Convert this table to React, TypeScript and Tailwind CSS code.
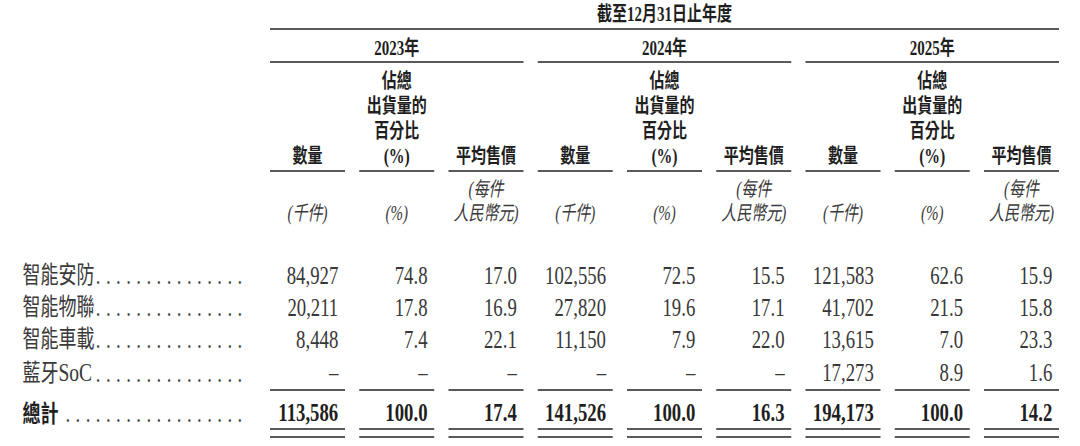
const years = ['2023', '2024', '2025'];

const rows: { label: string; latin?: string; v: string[] }[] = [
  { label: '智能安防', v: ['84,927', '74.8', '17.0', '102,556', '72.5', '15.5', '121,583', '62.6', '15.9'] },
  { label: '智能物聯', v: ['20,211', '17.8', '16.9', '27,820', '19.6', '17.1', '41,702', '21.5', '15.8'] },
  { label: '智能車載', v: ['8,448', '7.4', '22.1', '11,150', '7.9', '22.0', '13,615', '7.0', '23.3'] },
  { label: '藍牙', latin: 'SoC', v: ['–', '–', '–', '–', '–', '–', '17,273', '8.9', '1.6'] },
];

const totals = ['113,586', '100.0', '17.4', '141,526', '100.0', '16.3', '194,173', '100.0', '14.2'];

function Dots({ n }: { n: number }) {
  return (
    <span className="text-[25px] leading-none tracking-[7.25px] mr-[-7.25px] text-[#444] whitespace-nowrap">
      {'.'.repeat(n)}
    </span>
  );
}

export default function App() {
  const idx = [0, 1, 2, 3, 4, 5, 6, 7, 8];
  return (
    <div className="w-[1080px] h-[446px] overflow-hidden bg-white">
      <div className="w-[1440px] origin-top-left [transform:scaleX(0.75)] font-['Liberation_Serif','Noto_Sans_CJK_TC',serif] text-[#383838]">
        {/* header */}
        <div className="ml-[360px] w-[1052px] text-[#1f1f1f] font-bold text-[20px]">
          <div className="h-[30px] border-b-2 border-[#5a5a5a] flex items-center justify-center leading-none">
            截至12月31日止年度
          </div>
          <div className="flex gap-[19px]">
            {years.map((y) => (
              <div
                key={y}
                className="w-[338px] h-[33px] pt-[4px] border-b-2 border-[#5a5a5a] flex items-center justify-center leading-none"
              >
                {y}年
              </div>
            ))}
          </div>
          <div className="flex gap-[19px]">
            {years.map((y) => (
              <div key={y} className="flex gap-[19px]">
                <div className="w-[100px] h-[109px] pb-[1px] border-b-2 border-[#5a5a5a] flex flex-col justify-end items-center leading-[25px]">
                  <span>數量</span>
                </div>
                <div className="w-[100px] h-[109px] pb-[1px] border-b-2 border-[#5a5a5a] flex flex-col justify-end items-center leading-[25px]">
                  <span>佔總</span>
                  <span>出貨量的</span>
                  <span>百分比</span>
                  <span className="text-[21px]">(%)</span>
                </div>
                <div className="w-[100px] h-[109px] pb-[1px] border-b-2 border-[#5a5a5a] flex flex-col justify-end items-center leading-[25px]">
                  <span>平均售價</span>
                </div>
              </div>
            ))}
          </div>
          <div className="flex gap-[19px] pt-[5px] font-normal italic text-[#3a3a3a]">
            {years.map((y) => (
              <div key={y} className="flex gap-[19px]">
                <div className="w-[100px] h-[48px] flex flex-col justify-end items-center leading-[24px]">
                  <span>(千件)</span>
                </div>
                <div className="w-[100px] h-[48px] flex flex-col justify-end items-center leading-[24px]">
                  <span>(%)</span>
                </div>
                <div className="w-[100px] h-[48px] flex flex-col justify-end items-center leading-[24px]">
                  <span>(每件</span>
                  <span>人民幣元)</span>
                </div>
              </div>
            ))}
          </div>
        </div>

        {/* body */}
        <div className="mt-[34px] grid grid-cols-[341px_repeat(9,100px)] gap-x-[19px]">
          {rows.map((r, ri) => {
            const last = ri === rows.length - 1;
            return [
              <div
                key={`l${ri}`}
                className={`${last ? 'h-[36px]' : 'h-[32px]'} pl-[30px] pr-[18px] flex items-center justify-between`}
              >
                <span className="text-[24px] leading-none text-[#3a3a3a]">
                  {r.label}
                  {r.latin ? <span className="text-[26px]">{r.latin}</span> : null}
                </span>
                <Dots n={15} />
              </div>,
              ...idx.map((i) => (
                <div
                  key={`c${ri}-${i}`}
                  className={`${
                    last ? 'h-[36px] border-b-2 border-[#5a5a5a]' : 'h-[32px]'
                  } pr-[9px] flex items-center justify-end text-[25px] leading-none`}
                >
                  {r.v[i]}
                </div>
              )),
            ];
          })}
          <div className="h-[39px] pt-[6px] pl-[30px] pr-[18px] flex items-center justify-between">
            <span className="text-[24px] leading-none font-bold text-[#1f1f1f]">總計</span>
            <Dots n={18} />
          </div>
          {idx.map((i) => (
            <div key={`t${i}`} className="pb-[5.5px] border-b-2 border-[#5a5a5a]">
              <div className="h-[39px] pt-[6px] pr-[9px] border-b-2 border-[#5a5a5a] flex items-center justify-end text-[25px] leading-none font-bold text-[#1f1f1f]">
                {totals[i]}
              </div>
            </div>
          ))}
        </div>
      </div>
    </div>
  );
}
